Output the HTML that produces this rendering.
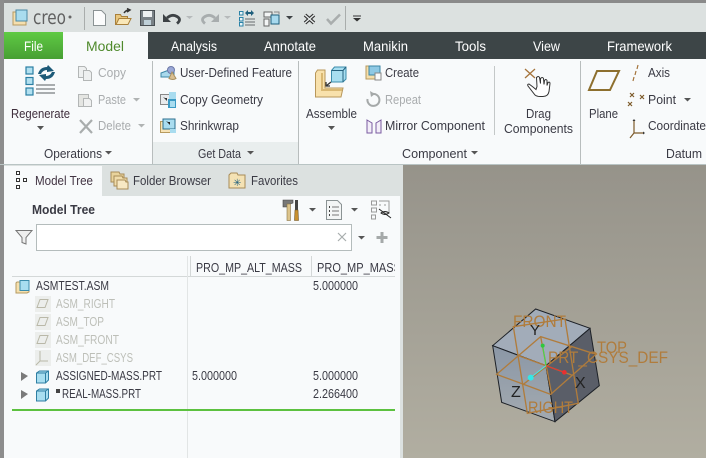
<!DOCTYPE html>
<html><head><meta charset="utf-8"><style>
html,body{margin:0;padding:0;width:706px;height:458px;overflow:hidden;background:#f8fafb}
svg{display:block}
text{font-family:"Liberation Sans",sans-serif;font-size:13px;fill:#3a3a44}
.g{fill:#a9acae}.t{fill:#fff;font-size:14px}.d{fill:#bdbfb8}
.o{fill:#b07c3c;font-size:17px}
</style></head><body>
<svg width="706" height="458" viewBox="0 0 706 458" xmlns="http://www.w3.org/2000/svg">
<defs>
<linearGradient id="vp" x1="0" y1="0" x2="0" y2="1"><stop offset="0" stop-color="#96938a"/><stop offset="1" stop-color="#b1aea1"/></linearGradient>
<linearGradient id="gr" x1="0" y1="0" x2="0" y2="1"><stop offset="0" stop-color="#5fca44"/><stop offset="1" stop-color="#479f33"/></linearGradient>
<linearGradient id="lf" x1="0" y1="0" x2="0" y2="1"><stop offset="0" stop-color="#8b97a6"/><stop offset="1" stop-color="#a3aab0"/></linearGradient>
<clipPath id="c1"><rect x="312" y="256" width="83" height="20"/></clipPath>
</defs>
<!-- frame / bars -->
<rect width="706" height="458" fill="#f8fafb"/>
<rect width="706" height="3" fill="#8a8a8a"/>
<rect y="3" width="706" height="29" fill="#dce1e0"/>
<rect y="32" width="706" height="27" fill="#3d4547"/>
<rect x="4" y="32" width="59" height="27" fill="url(#gr)"/>
<rect x="63" y="32" width="85" height="27" fill="#f8fafb"/>
<rect y="0" width="4" height="458" fill="#8d8d8d"/>
<!-- quick access -->
<path d="M13 12h13v13h-13z" fill="#f5dfae" stroke="#b89a60"/><path d="M16 10h11v11h-11z" fill="#a9dcef" stroke="#4a89a5"/>
<text x="33" y="24" style="font-family:'DejaVu Sans',sans-serif;font-size:19px;fill:#606060" textLength="33" lengthAdjust="spacingAndGlyphs">creo</text>
<circle cx="70" cy="17" r="1.500" fill="#666"/>
<rect x="84" y="7" width="1" height="23" fill="#a9adac"/>
<path d="M93.500 10.500h8l4 4v11h-12z" fill="#fbfcfc" stroke="#8b9394"/>
<path d="M115.500 24.500v-10h5l1 2h6v8z" fill="#e8c77e" stroke="#a9803b"/><path d="M116 24.500l3-6h12l-3 6z" fill="#f9e7b8" stroke="#a9803b"/><path d="M124 13q2-3 5-3m-2-1.500l3 1.500-3 2" fill="none" stroke="#333" stroke-width="1.500"/>
<path d="M140.500 10.500h14v15h-14z" fill="#7a8287" stroke="#4a5054"/><rect x="143" y="11" width="9" height="6" fill="#eef1f2"/><rect x="144" y="20" width="7" height="5" fill="#bfd0d8"/>
<path d="M167 18q5-4.500 10-1.500t0 7" fill="none" stroke="#3d4245" stroke-width="2.800"/><path d="M163 14v8h8z" fill="#3d4245"/>
<path d="M186 16h7l-3.500 3z" fill="#b6babb"/>
<path d="M215 18q-5-4.500-10-1.500t0 7" fill="none" stroke="#a8adae" stroke-width="2.800"/><path d="M219 14v8h-8z" fill="#a8adae"/>
<path d="M224 16h7l-3.500 3z" fill="#b6babb"/>
<g fill="#e8f4f8" stroke="#2b83a8"><rect x="239.500" y="11.500" width="3.500" height="3.500"/><rect x="239.500" y="17.500" width="3.500" height="3.500"/><rect x="239.500" y="22.500" width="3.500" height="3.500"/></g>
<path d="M245 13l3-3v2h3v-2l3 3-3 3v-2h-3v2z" fill="#1f5f7d"/><path d="M245 19h10M245 22h10M245 25h10" stroke="#8d9294" stroke-width="1.500"/>
<path d="M264 12h8v5h-8zM264 19h5v7h-5z" fill="#f3f5f5" stroke="#666"/><rect x="271" y="15" width="8" height="9" fill="#a7d9ee" stroke="#1f5f7d"/><path d="M274 12h5v2" fill="none" stroke="#888"/>
<path d="M286 16h7l-3.500 3.500z" fill="#3d4245"/>
<path d="M305 15l9 8m0-8l-9 8" stroke="#333" stroke-width="3.600"/><path d="M305 15l9 8m0-8l-9 8" stroke="#e8ecec" stroke-width="1.400"/>
<path d="M327 19l4 4.500 9-9" fill="none" stroke="#a9adad" stroke-width="2.500"/>
<rect x="345" y="6" width="1" height="24" fill="#a9adac"/>
<path d="M353 16h8" stroke="#333"/><path d="M353 18h8l-4 3.500z" fill="#333"/>
<!-- tabs -->
<text x="24" y="51" class="t" textLength="19" lengthAdjust="spacingAndGlyphs">File</text>
<text x="86" y="51" style="font-size:14px;fill:#4f8a2c" textLength="38" lengthAdjust="spacingAndGlyphs">Model</text>
<text x="171" y="51" class="t" textLength="46" lengthAdjust="spacingAndGlyphs">Analysis</text>
<text x="264" y="51" class="t" textLength="52" lengthAdjust="spacingAndGlyphs">Annotate</text>
<text x="363" y="51" class="t" textLength="45" lengthAdjust="spacingAndGlyphs">Manikin</text>
<text x="455" y="51" class="t" textLength="31" lengthAdjust="spacingAndGlyphs">Tools</text>
<text x="533" y="51" class="t" textLength="27" lengthAdjust="spacingAndGlyphs">View</text>
<text x="607" y="51" class="t" textLength="65" lengthAdjust="spacingAndGlyphs">Framework</text>
<!-- ribbon groups -->
<rect x="153" y="142" width="145" height="23" fill="#e9eeee"/>
<rect x="152" y="61" width="1" height="104" fill="#b8bdbd"/>
<rect x="298" y="61" width="1" height="104" fill="#b8bdbd"/>
<rect x="494" y="66" width="1" height="69" fill="#c4c8c8"/>
<rect x="580" y="61" width="1" height="104" fill="#b8bdbd"/>
<!-- regenerate -->
<g fill="#b2e0f0" stroke="#2b7ea3" stroke-width="1.200"><rect x="26" y="67" width="7" height="7"/><rect x="26" y="77.500" width="7" height="7"/><rect x="26" y="88" width="7" height="7"/></g>
<path d="M38 74q2-7 9-7l1-2 6 6-7 1v-2q-4 0-6 4zM55 72q-2 7-9 7l-1 2-6-6 7-1v2q4 0 6-4z" fill="#1d5a78"/>
<path d="M36 85h19M36 89h19M36 93h19" stroke="#8e9294" stroke-width="1.500"/>
<text x="11" y="118" style="fill:#3f2e3c" textLength="59" lengthAdjust="spacingAndGlyphs">Regenerate</text>
<path d="M37 126h7l-3.500 4z" fill="#555"/>
<!-- copy paste delete -->
<path d="M78.500 66.500h6l2 2v9h-8z" fill="#eef0f0" stroke="#b3b6b6"/><path d="M83.500 70.500h6l2 2v8h-8z" fill="#eef0f0" stroke="#b3b6b6"/>
<text x="98" y="77" class="g" textLength="28" lengthAdjust="spacingAndGlyphs">Copy</text>
<path d="M78.500 94.500h10v12h-10z" fill="#e4e5e2" stroke="#b3b6b6"/><path d="M83.500 98.500h6l2 2v6h-8z" fill="#f0f1f1" stroke="#b3b6b6"/>
<text x="98" y="104" class="g" textLength="28" lengthAdjust="spacingAndGlyphs">Paste</text>
<path d="M133 98h7l-3.500 3.500z" fill="#b0b3b3"/>
<path d="M80 120l12 13m0-13l-12 13" stroke="#a9adad" stroke-width="2.200"/>
<text x="98" y="130" class="g" textLength="33" lengthAdjust="spacingAndGlyphs">Delete</text>
<path d="M138 124h7l-3.500 3.500z" fill="#b0b3b3"/>
<text x="44" y="158" textLength="58" lengthAdjust="spacingAndGlyphs">Operations</text><path d="M105 151h7l-3.500 3.500z" fill="#555"/>
<!-- get data -->
<path d="M161 73l8-3h5v7h-13z" fill="#a9d9ec" stroke="#3c86a6"/><circle cx="171" cy="70" r="3.500" fill="#9aa8d6" stroke="#6d79a8"/><path d="M172 72l4 6.500q-3 2-7 0z" fill="#d9bf92" stroke="#a8905f"/>
<rect x="160.500" y="94.500" width="9" height="10" fill="#e8eaec" stroke="#888"/><path d="M163 97l4 4v-3h-2" fill="#333"/><rect x="169" y="92" width="7" height="7" fill="#a9dcef"/><rect x="168" y="99" width="8" height="9" fill="#3c9ac4"/><rect x="170" y="101" width="5" height="6" fill="#a9dcef"/>
<path d="M160.500 121.500h10v11h-10z" fill="#f7e3b6" stroke="#b79a5e"/><rect x="163" y="119" width="12" height="10" fill="#a9dcef" stroke="#2c6f8f"/><path d="M166 121l4 4v-3h-2" fill="#222"/><rect x="170" y="129" width="6" height="4" fill="#a9dcef"/>
<text x="180" y="77" textLength="112" lengthAdjust="spacingAndGlyphs">User-Defined Feature</text>
<text x="180" y="104" textLength="83" lengthAdjust="spacingAndGlyphs">Copy Geometry</text>
<text x="180" y="130" textLength="59" lengthAdjust="spacingAndGlyphs">Shrinkwrap</text>
<text x="198" y="158" textLength="43" lengthAdjust="spacingAndGlyphs">Get Data</text><path d="M247 151h7l-3.500 3.500z" fill="#555"/>
<!-- assemble -->
<path d="M315.500 73l2-3h7.500v18h18l-2 9h-25.500z" fill="#f8e1ac" stroke="#b8975a"/><path d="M322 73v17h20" fill="none" stroke="#d9b873" stroke-width="2"/>
<path d="M331.500 70.500l3-3.500h11.500v12l-3 3h-11.500z" fill="#a8def0" stroke="#3b8cab"/><path d="M331.500 70.500h11.500v11.500M343 70.500l3-3.500" fill="none" stroke="#26617e"/>
<path d="M326 86l5-4m-5 0v4h4" fill="none" stroke="#333" stroke-width="1.300"/>
<text x="306" y="118" textLength="51" lengthAdjust="spacingAndGlyphs">Assemble</text>
<path d="M328 126h7l-3.500 4z" fill="#555"/>
<!-- component -->
<path d="M366 66h13v13h-13z" fill="#f5deaa" stroke="#b79a5e"/><rect x="369" y="66" width="11" height="9" fill="#8fc9e4" stroke="#3c86a6"/><rect x="375" y="73" width="6" height="7" fill="#fafafa" stroke="#888"/>
<text x="385" y="77" textLength="34" lengthAdjust="spacingAndGlyphs">Create</text>
<path d="M367.500 99a6 6 0 1 0 5-5" fill="none" stroke="#a5a9a9" stroke-width="2"/><path d="M370 91l5 3-4 3z" fill="#a5a9a9"/>
<text x="385" y="104" class="g" textLength="36" lengthAdjust="spacingAndGlyphs">Repeat</text>
<path d="M367 120l5 3v10h-5zM381 120l-5 3v10h5z" fill="#f3eef8" stroke="#7a5ba0"/>
<text x="385" y="130" textLength="100" lengthAdjust="spacingAndGlyphs">Mirror Component</text>
<text x="402" y="158" textLength="65" lengthAdjust="spacingAndGlyphs">Component</text><path d="M471 151h7l-3.500 3.500z" fill="#555"/>
<!-- drag -->
<path d="M525 69l10 9m0-9l-10 9" stroke="#a5743c" stroke-width="1.300"/>
<path d="M533 87l-4-3q-2 0-1 2l7 9q2 1.500 5 1.500h3q5 0 6-5l1-8q0-2-2-1l-1 3 0-5q-1-2-2.500 0l-.5 4-.5-6q-1-2-3 0l0 5-1-6q-1-2-3 0l.5 9-1 3z" fill="#fff" stroke="#333" stroke-width="1"/>
<text x="526" y="118" textLength="25" lengthAdjust="spacingAndGlyphs">Drag</text>
<text x="504" y="133" textLength="69" lengthAdjust="spacingAndGlyphs">Components</text>
<!-- datum -->
<path d="M597 71h22l-9 19h-21z" fill="none" stroke="#8d6f2e" stroke-width="2"/>
<text x="589" y="118" textLength="29" lengthAdjust="spacingAndGlyphs">Plane</text>
<path d="M638 65l-1 4M636 71l-1 4M634 77l-1 4" stroke="#a5743c" stroke-width="1.200"/>
<text x="648" y="77" textLength="22" lengthAdjust="spacingAndGlyphs">Axis</text>
<path d="M630 93l4 4m0-4l-4 4M640 95l4 4m0-4l-4 4M628 102l4 4m0-4l-4 4" stroke="#7d5a2a" stroke-width="1.200"/>
<text x="648" y="104" textLength="28" lengthAdjust="spacingAndGlyphs">Point</text>
<path d="M684 98h7l-3.500 3.500z" fill="#555"/>
<path d="M634 120v13h9m-9 0l-4 5" fill="none" stroke="#7d5a2a" stroke-width="1.200"/><path d="M632.500 121h3l-1.500-2zM643 131.500v3l2-1.500z" fill="#333"/>
<text x="648" y="130" textLength="58" lengthAdjust="spacingAndGlyphs">Coordinate</text>
<text x="666" y="158" textLength="36" lengthAdjust="spacingAndGlyphs">Datum</text>
<!-- panel tabs -->
<rect x="0" y="164" width="706" height="1" fill="#b9c4c4"/>
<rect x="4" y="165" width="399" height="31" fill="#dce1e0"/>
<rect y="165" width="4" height="293" fill="#8d8d8d"/>
<rect x="4" y="166" width="98" height="30" fill="#f8fafb"/>
<rect x="4" y="196" width="396" height="262" fill="#f8fafb"/>
<rect x="400" y="196" width="3" height="262" fill="#dce1e0"/>
<g fill="#fff" stroke="#333"><rect x="16.500" y="171.500" width="3" height="3"/><rect x="16.500" y="178.500" width="3" height="3"/><rect x="16.500" y="185.500" width="3" height="3"/><rect x="23.500" y="178.500" width="3" height="3"/></g>
<text x="35" y="185" style="fill:#423443" textLength="58" lengthAdjust="spacingAndGlyphs">Model Tree</text>
<path d="M111 172h8l1 2h4v8h-13z" fill="#e9d39c" stroke="#a88c57"/><path d="M114 176h8l1 2h4v8h-13z" fill="#f0dcab" stroke="#a88c57"/><path d="M117 180h8l1 2h2v7h-11z" fill="#f7e8c4" stroke="#a88c57"/>
<text x="133" y="185" textLength="78" lengthAdjust="spacingAndGlyphs">Folder Browser</text>
<path d="M229 175l2-2h6l1 2h7v13h-16z" fill="#f4e2b4" stroke="#a88c57"/><text x="233" y="186" style="font-size:10px;fill:#1f5f7d">✳</text>
<text x="251" y="185" textLength="47" lengthAdjust="spacingAndGlyphs">Favorites</text>
<!-- model tree toolbar -->
<text x="32" y="214" style="font-weight:bold;fill:#3a3a44" textLength="63" lengthAdjust="spacingAndGlyphs">Model Tree</text>
<path d="M283 200h10v3l-3 1v3h-7z" fill="#777" stroke="#444" stroke-width=".6"/><rect x="287" y="204" width="3.500" height="16.500" fill="#dcc48c" stroke="#8a7445" stroke-width=".6"/>
<rect x="295" y="200" width="3" height="10" fill="#444"/><path d="M295 210h3l.5 10.500h-4z" fill="#c9912e" stroke="#6a5022" stroke-width=".6"/>
<path d="M309 208h7l-3.500 3.500z" fill="#555"/>
<path d="M326.500 200.500h11l4 4v15h-15z" fill="#f3f5f5" stroke="#8b9394"/><path d="M329 207h1M329 211h1M329 215h1" stroke="#444" stroke-width="2"/><path d="M332 207h7M332 211h7M332 215h7" stroke="#777"/>
<path d="M351 208h7l-3.500 3.500z" fill="#555"/>
<g fill="none" stroke="#999"><rect x="371.500" y="201" width="5" height="4"/><rect x="371.500" y="208" width="5" height="4"/><rect x="371.500" y="215" width="4" height="4"/><path d="M379 201h10v12M379 205h2M384 205h2"/></g>
<path d="M381 213q4-3 8 0q-4 3-8 0z" fill="#ddd" stroke="#222"/><path d="M379 209l12 9" stroke="#222"/>
<!-- filter -->
<path d="M16 230.500h16l-6 7v6.500l-4-1.500v-5z" fill="#eee" stroke="#777"/>
<rect x="36.500" y="224.500" width="315" height="26" fill="#fff" stroke="#b4bcbc"/>
<path d="M338 233l8 8m0-8l-8 8" stroke="#a8adad" stroke-width="1.200"/>
<path d="M358 236h7l-3.500 3.500z" fill="#555"/>
<path d="M382 232v11M376.500 237.500h11" stroke="#a5a9a9" stroke-width="3"/>
<!-- table -->
<rect x="12" y="276" width="383" height="1" fill="#d4d8d8"/>
<rect x="187" y="256" width="1" height="202" fill="#e2e5e5"/><rect x="190" y="256" width="1" height="20" fill="#d4d8d8"/>
<rect x="311" y="256" width="1" height="20" fill="#d4d8d8"/>
<text x="196" y="272" textLength="106" lengthAdjust="spacingAndGlyphs">PRO_MP_ALT_MASS</text>
<text x="317" y="272" clip-path="url(#c1)" textLength="84" lengthAdjust="spacingAndGlyphs">PRO_MP_MASS</text>
<!-- tree -->
<path d="M17 282h12v10l-2 1h-11v-10z" fill="#f6e0ad" stroke="#b49a62"/><rect x="20" y="280.500" width="9" height="10" fill="#a8def0" stroke="#3b8cab"/>
<text x="36" y="290" textLength="73" lengthAdjust="spacingAndGlyphs">ASMTEST.ASM</text>
<rect x="35" y="296" width="16" height="16" fill="#eceeec"/><path d="M40 299.500h8l-3 8h-8z" fill="none" stroke="#b9b8a8"/>
<text x="56" y="308" class="d" textLength="59" lengthAdjust="spacingAndGlyphs">ASM_RIGHT</text>
<rect x="35" y="314" width="16" height="16" fill="#eceeec"/><path d="M40 317.500h8l-3 8h-8z" fill="none" stroke="#b9b8a8"/>
<text x="56" y="326" class="d" textLength="48" lengthAdjust="spacingAndGlyphs">ASM_TOP</text>
<rect x="35" y="332" width="16" height="16" fill="#eceeec"/><path d="M40 335.500h8l-3 8h-8z" fill="none" stroke="#b9b8a8"/>
<text x="56" y="344" class="d" textLength="63" lengthAdjust="spacingAndGlyphs">ASM_FRONT</text>
<rect x="35" y="350" width="16" height="16" fill="#eceeec"/><path d="M40 351v10h8M40 361l-4 4" fill="none" stroke="#b9b8a8"/>
<text x="56" y="362" class="d" textLength="77" lengthAdjust="spacingAndGlyphs">ASM_DEF_CSYS</text>
<path d="M21 372l7 4-7 5z" fill="#7a7a7a"/>
<path d="M36.500 373l3-2h9v9l-3 3h-9z" fill="#a8def0" stroke="#2f7fa3"/><path d="M36.500 373h9v10M45.500 373l3-2" fill="none" stroke="#2f7fa3"/>
<text x="56" y="380" textLength="106" lengthAdjust="spacingAndGlyphs">ASSIGNED-MASS.PRT</text>
<path d="M21 390l7 4-7 5z" fill="#7a7a7a"/>
<path d="M36.500 391l3-2h9v9l-3 3h-9z" fill="#a8def0" stroke="#2f7fa3"/><path d="M36.500 391h9v10M45.500 391l3-2" fill="none" stroke="#2f7fa3"/>
<rect x="56" y="389" width="4" height="4" fill="#444"/>
<text x="62" y="398" textLength="79" lengthAdjust="spacingAndGlyphs">REAL-MASS.PRT</text>
<text x="313" y="290" textLength="45" lengthAdjust="spacingAndGlyphs">5.000000</text>
<text x="192" y="380" textLength="45" lengthAdjust="spacingAndGlyphs">5.000000</text>
<text x="313" y="380" textLength="45" lengthAdjust="spacingAndGlyphs">5.000000</text>
<text x="313" y="398" textLength="45" lengthAdjust="spacingAndGlyphs">2.266400</text>
<rect x="12" y="409" width="383" height="2" fill="#5cc13f"/>
<!-- viewport -->
<rect x="403" y="165" width="303" height="293" fill="url(#vp)"/>
<g transform="translate(470 295) scale(.33333)">
<path d="M197 42L360 100L228 212L68 152z" fill="#a2acb9" stroke="#1c2026" stroke-width="3"/>
<path d="M68 152L228 212L255 380L95 322z" fill="url(#lf)" stroke="#1c2026" stroke-width="3"/>
<path d="M360 100L388 272L255 380L228 212z" fill="#5a5e68" stroke="#1c2026" stroke-width="3"/>
<g fill="none" stroke="#b07c3c" stroke-width="4">
<path d="M130 95L285 72L325 325L172 355z"/>
<path d="M80 238L212 125L378 178L242 298z"/>
<path d="M145 182L305 240M212 125L245 298M160 268L305 155"/>
</g>
<path d="M228 212L218 152" stroke="#3fe04a" stroke-width="3"/><circle cx="218" cy="152" r="6" fill="#2fc83c"/>
<path d="M228 212L283 232" stroke="#e83030" stroke-width="3"/><circle cx="283" cy="232" r="7" fill="#e83030"/>
<path d="M228 212L182 248" stroke="#45e8e8" stroke-width="3"/><circle cx="182" cy="248" r="9" fill="#35e6e6"/>
</g>
<text x="513" y="327" class="o" textLength="53" lengthAdjust="spacingAndGlyphs">FRONT</text>
<text x="597" y="353" class="o" textLength="30" lengthAdjust="spacingAndGlyphs">TOP</text>
<text x="548" y="363" class="o" textLength="120" lengthAdjust="spacingAndGlyphs">PRT_CSYS_DEF</text>
<text x="528" y="413" class="o" textLength="45" lengthAdjust="spacingAndGlyphs">RIGHT</text>
<text x="530" y="335" style="font-size:15px;fill:#222">Y</text>
<text x="511" y="397" style="font-size:16px;fill:#222">Z</text>
<text x="575" y="388" style="font-size:16px;fill:#222">X</text>
</svg>
</body></html>
